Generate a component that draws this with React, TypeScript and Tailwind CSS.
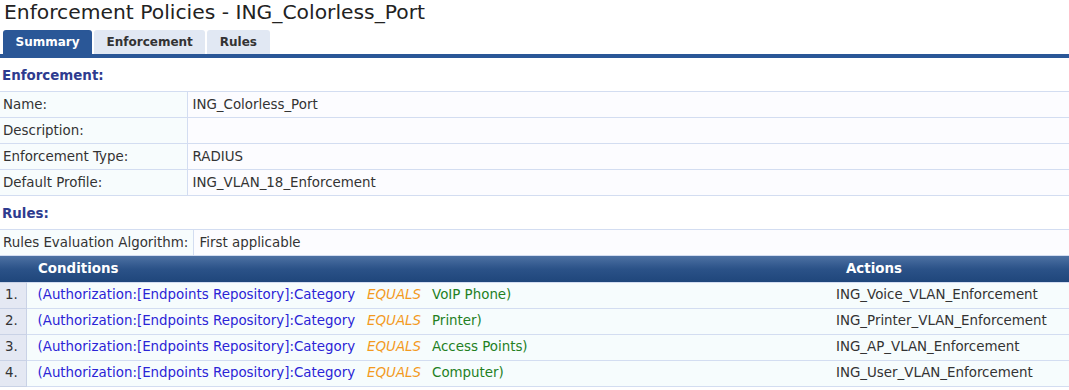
const summary = [
  { label: 'Name:', value: 'ING_Colorless_Port' },
  { label: 'Description:', value: '' },
  { label: 'Enforcement Type:', value: 'RADIUS' },
  { label: 'Default Profile:', value: 'ING_VLAN_18_Enforcement' },
];

const rules = [
  { value: 'VoIP Phone', action: 'ING_Voice_VLAN_Enforcement' },
  { value: 'Printer', action: 'ING_Printer_VLAN_Enforcement' },
  { value: 'Access Points', action: 'ING_AP_VLAN_Enforcement' },
  { value: 'Computer', action: 'ING_User_VLAN_Enforcement' },
];

const tabs = ['Summary', 'Enforcement', 'Rules'];

export default function App() {
  return (
    <div className="w-[1069px] h-[390px] overflow-hidden bg-white font-['DejaVu_Sans',sans-serif] text-[13.4px] text-[#333]">
      <h1 className="pl-[4px] h-[30px] text-[20.3px] leading-[24px] text-[#222]">
        Enforcement Policies - ING_Colorless_Port
      </h1>

      {/* tabs */}
      <div className="flex items-end gap-[2px] pl-[3px] border-b-4 border-[#2a5797] h-[28px]">
        {tabs.map((t, i) => (
          <div
            key={t}
            className={
              i === 0
                ? 'h-[24px] px-[12.5px] rounded-t-[3px] bg-[#2a5797] text-white text-[12px] font-bold leading-[25px]'
                : 'h-[24px] px-[12.5px] rounded-t-[3px] bg-[#e1e8f3] text-[#333] text-[12px] font-bold leading-[25px]'
            }
          >
            {t}
          </div>
        ))}
      </div>

      <div className="h-[33px] pl-[2px] pt-[9px] font-bold text-[#2e3b8f] leading-[18px]">Enforcement:</div>

      <table className="w-full border-collapse">
        <tbody>
          {summary.map((r) => (
            <tr key={r.label} className="h-[26px]">
              <td className="w-[187px] border-y border-r border-[#d3ddf1] bg-[#f7fcfd] pl-[3px] pt-[1px] p-0">{r.label}</td>
              <td className="border-y border-[#d3ddf1] bg-[#fcfcff] pl-[5px] pt-[1px] p-0">{r.value}</td>
            </tr>
          ))}
        </tbody>
      </table>

      <div className="h-[33px] pl-[2px] pt-[9px] font-bold text-[#2e3b8f] leading-[18px]">Rules:</div>

      <table className="w-full border-collapse">
        <tbody>
          <tr className="h-[26px]">
            <td className="w-[193px] border-y border-r border-[#d3ddf1] bg-[#f7fcfd] pl-[3px] pt-[1px] p-0 whitespace-nowrap">
              Rules Evaluation Algorithm:
            </td>
            <td className="border-y border-[#d3ddf1] bg-[#fcfcff] pl-[6px] pt-[1px] p-0">First applicable</td>
          </tr>
        </tbody>
      </table>

      <table className="w-full border-collapse">
        <thead>
          <tr className="h-[26px] bg-gradient-to-b from-[#4d71a3] via-[#2b5288] to-[#1f467b]">
            <th className="w-[26px] p-0" />
            <th className="text-left font-bold text-white pl-[12px] p-0">Conditions</th>
            <th className="w-[233px] text-left font-bold text-white pl-[10px] p-0">Actions</th>
          </tr>
        </thead>
        <tbody>
          {rules.map((r, i) => (
            <tr key={r.action} className="h-[26px]">
              <td className="w-[26px] border-y border-r border-[#c9d2e6] bg-[#e4e8f3] pl-[5px] pt-[1px] p-0">{i + 1}.</td>
              <td className="border-y border-[#d3ddf1] bg-[#f6fcfd] pl-[11px] pt-[1px] p-0 whitespace-nowrap">
                <span className="text-[#2b24d6]">(Authorization:[Endpoints Repository]:Category</span>
                <span className="italic text-[#f39a1e] ml-[12px]">EQUALS</span>
                <span className="text-[#23801f] ml-[11px]">{r.value})</span>
              </td>
              <td className="border-y border-[#d3ddf1] bg-[#f6fcfd] pt-[1px] p-0 whitespace-nowrap">{r.action}</td>
            </tr>
          ))}
        </tbody>
      </table>
    </div>
  );
}
